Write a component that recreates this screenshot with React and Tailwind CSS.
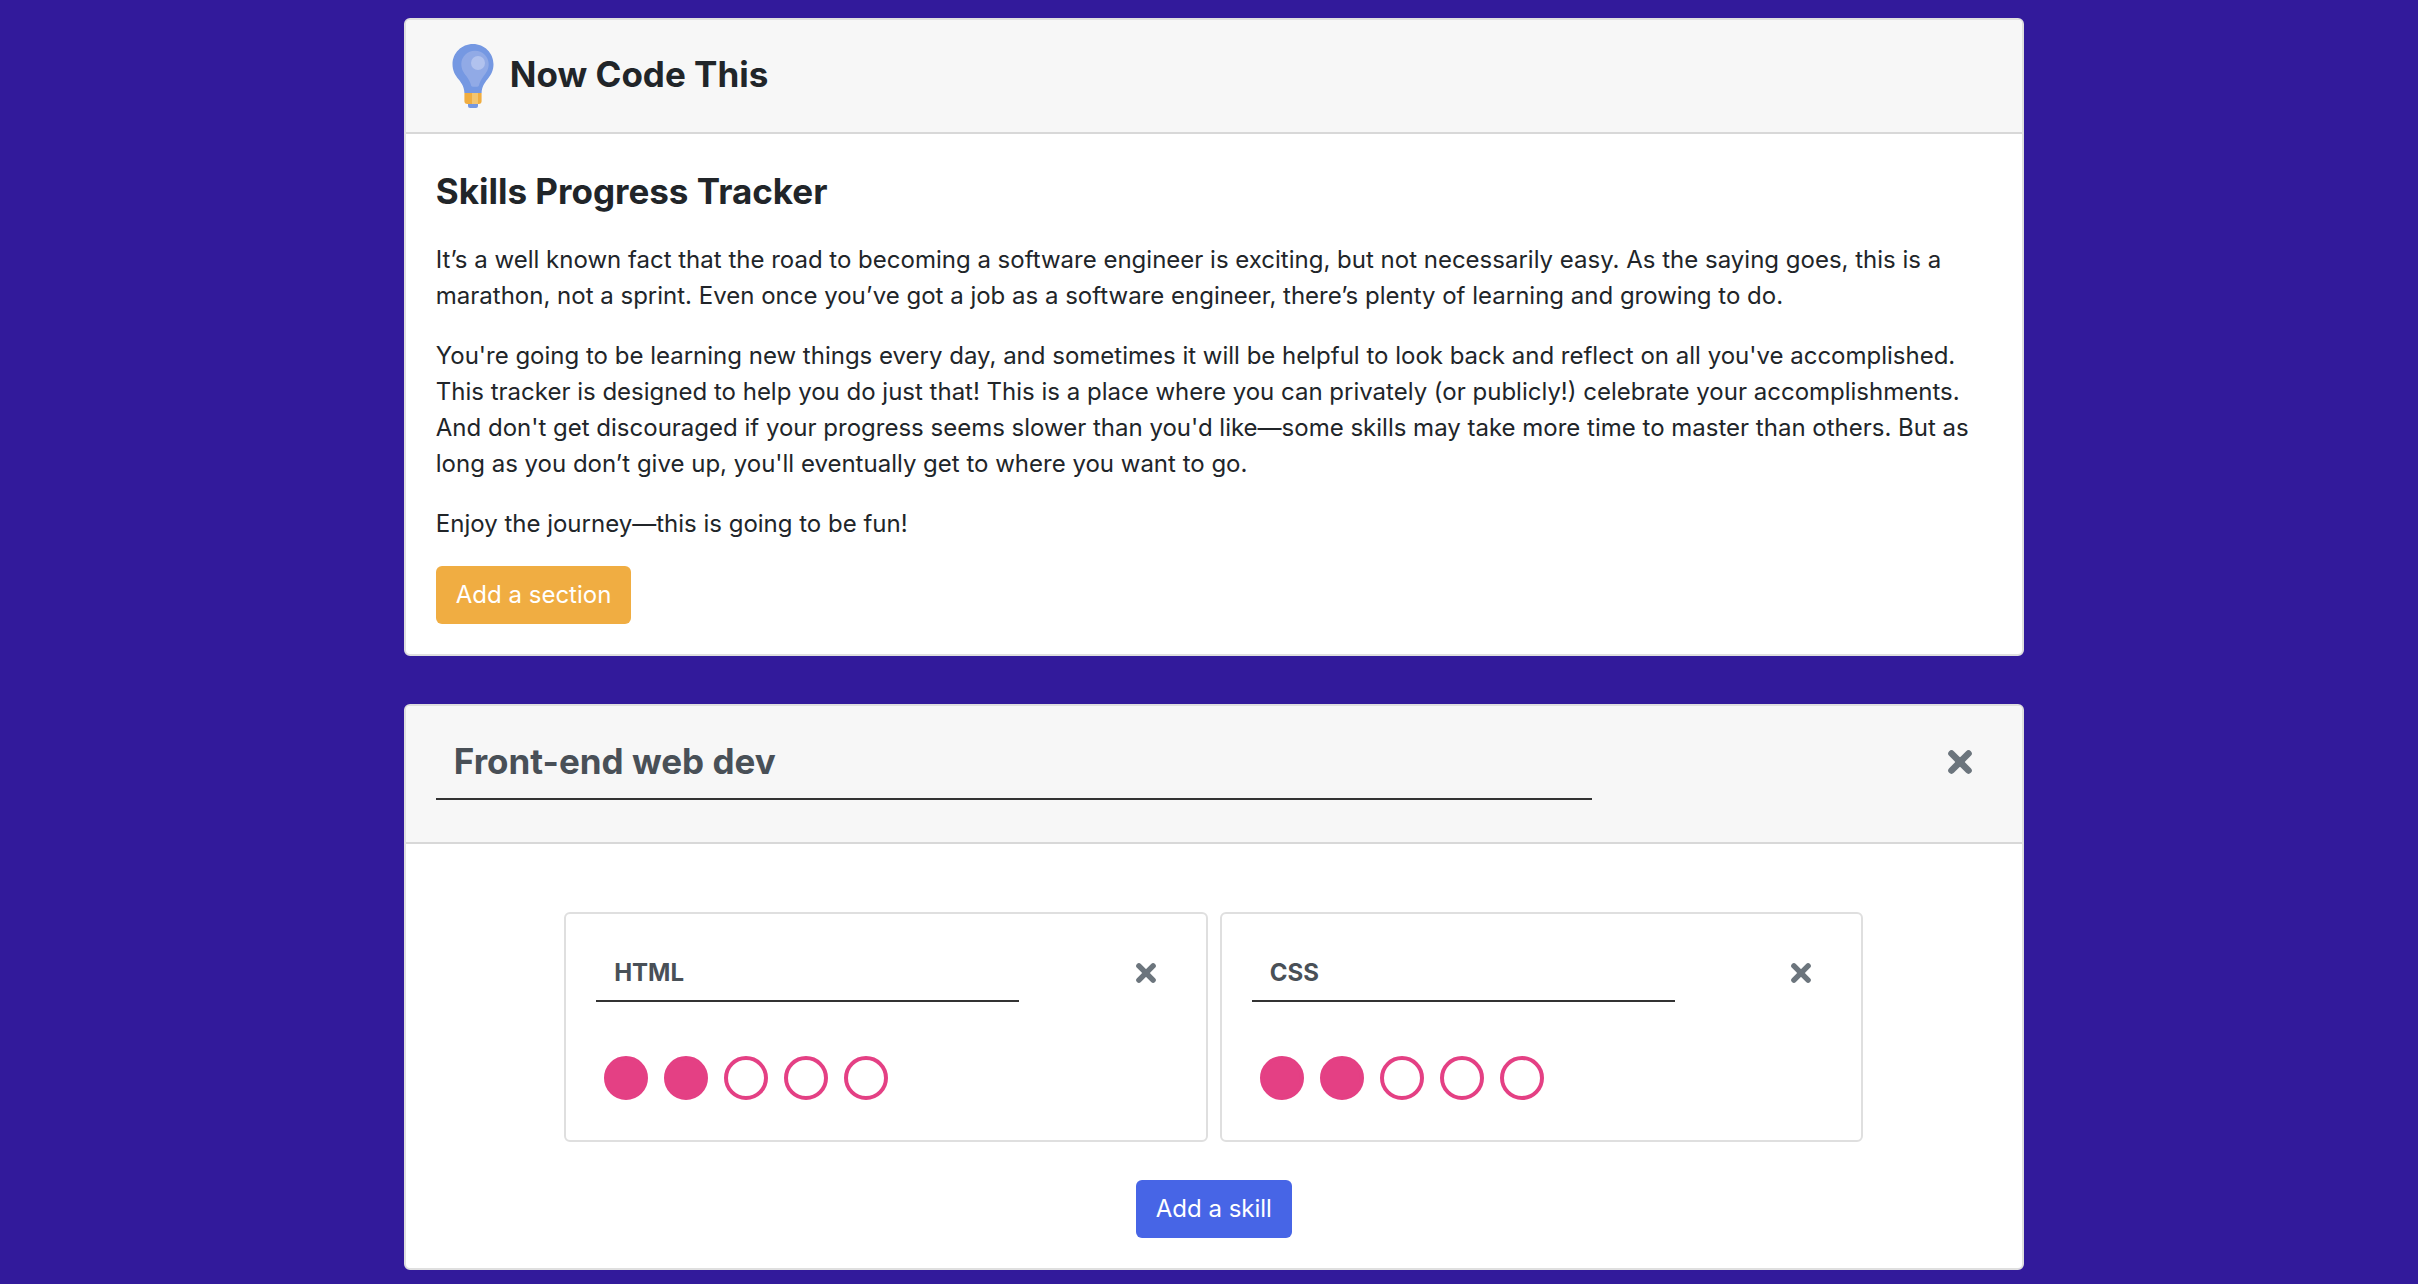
import { useState } from "react";

function Bulb() {
  return (
    <svg viewBox="0 0 42 64" className="h-16 w-[42px] shrink-0" aria-hidden="true">
      <path d="M21 0C9.600 0 .5 9 .5 20.200c0 6.600 2.700 10.800 6 15 3.500 4.400 5.700 8 5.900 13.800h17.200c.2-5.800 2.400-9.400 5.900-13.800 3.300-4.200 6-8.400 6-15C41.500 9 32.400 0 21 0z" fill="#7598e2" />
      <path d="M23 6.700c-7.700 0-13.700 6-13.700 13.300 0 5.200 2.300 8.500 5 12 2.500 3.300 4 6 4.700 9.300.2.900.8 1.400 1.600 1.400h4.800c.8 0 1.400-.5 1.600-1.400.7-3.300 2.200-6 4.700-9.300 2.700-3.500 5-6.800 5-12 0-7.300-6-13.300-13.700-13.300z" fill="#91aae6" />
      <circle cx="26" cy="19" r="7" fill="#b1c2ee" />
      <path d="M12.400 49h17.200v8a3 3 0 0 1-3 3H15.400a3 3 0 0 1-3-3z" fill="#f0ad40" />
      <path d="M20 49h6v11h-6z" fill="#f3c570" />
      <path d="M16 60h10v2a2 2 0 0 1-2 2h-6a2 2 0 0 1-2-2z" fill="#7598e2" />
    </svg>
  );
}

function Cross({ className }) {
  return (
    <svg viewBox="0 0 24 24" className={className} aria-hidden="true">
      <path d="M3.500 3.500l17 17M20.500 3.500l-17 17" stroke="currentColor" strokeWidth="6.600" strokeLinecap="round" />
      <path d="M12 6.800l5.200 5.200-5.200 5.200L6.800 12z" fill="currentColor" />
    </svg>
  );
}

function Card({ header, children }) {
  return (
    <section className="overflow-hidden rounded-md border-2 border-[#dfdfdf] bg-white">
      <header className="border-b-2 border-[#d8d8d8] bg-[#f7f7f7] px-[30px] py-[18px]">{header}</header>
      <div className="p-[30px]">{children}</div>
    </section>
  );
}

function Skill({ name, initial }) {
  const [level, setLevel] = useState(initial);
  return (
    <article className="flex-1 rounded-md border-2 border-[#dfdfdf] p-[30px]">
      <div className="flex items-center justify-between">
        <input
          aria-label="Skill name"
          defaultValue={name}
          className="h-[58px] w-[73%] border-b-2 border-[#333] bg-transparent px-[18px] font-bold text-[#495057] outline-none"
        />
        <button type="button" aria-label={"Remove " + name} className="px-5 text-[#6c757d]">
          <Cross className="size-5" />
        </button>
      </div>
      <div className="mt-[54px] mb-[10px] ml-2 flex gap-4" role="group" aria-label={name + " level"}>
        {[1, 2, 3, 4, 5].map((n) => (
          <button
            key={n}
            type="button"
            aria-label={"Level " + n}
            aria-pressed={n <= level}
            onClick={() => setLevel(n)}
            className={
              n <= level
                ? "size-11 rounded-full border-4 border-[#e44084] bg-[#e44084]"
                : "size-11 rounded-full border-4 border-[#e44084]"
            }
          />
        ))}
      </div>
    </article>
  );
}

export default function App() {
  return (
    <div className="min-h-screen bg-[#321a9b] py-[18px] font-['Inter',sans-serif] text-2xl leading-9 text-[#212529]">
      <main className="ml-[16.7%] flex w-[67%] flex-col gap-12">
        <Card
          header={
            <div className="flex h-[76px] items-center gap-4 pl-4">
              <Bulb />
              <h1 className="pb-1 text-[35px] font-bold">Now Code This</h1>
            </div>
          }
        >
          <h2 className="mb-6 text-[35px] leading-[54px] font-bold">Skills Progress Tracker</h2>
          <p className="mb-6">
            It’s a well known fact that the road to becoming a software engineer is exciting, but not necessarily easy. As the saying goes, this is a marathon, not a sprint. Even once you’ve got a job as a software engineer, there’s plenty of learning and growing to do.
          </p>
          <p className="mb-6">
            You're going to be learning new things every day, and sometimes it will be helpful to look back and reflect on all you've accomplished. This tracker is designed to help you do just that! This is a place where you can privately (or publicly!) celebrate your accomplishments. And don't get discouraged if your progress seems slower than you'd like—some skills may take more time to master than others. But as long as you don’t give up, you'll eventually get to where you want to go.
          </p>
          <p className="mb-6">Enjoy the journey—this is going to be fun!</p>
          <button type="button" className="block rounded-md bg-[#f0ad42] px-5 py-[11px] text-white">
            Add a section
          </button>
        </Card>

        <Card
          header={
            <div className="mb-6 flex items-center justify-between">
              <input
                aria-label="Section name"
                defaultValue="Front-end web dev"
                className="h-[76px] w-[74.3%] border-b-2 border-[#333] bg-transparent px-[18px] text-[35px] font-bold text-[#495057] outline-none"
              />
              <button type="button" aria-label="Remove section" className="px-5 text-[#6c757d]">
                <Cross className="size-6" />
              </button>
            </div>
          }
        >
          <div className="mx-auto my-[38px] flex w-[83.5%] gap-3">
            <Skill name="HTML" initial={2} />
            <Skill name="CSS" initial={2} />
          </div>
          <button type="button" className="mx-auto block rounded-md bg-[#4765e6] px-5 py-[11px] text-white">
            Add a skill
          </button>
        </Card>
      </main>
    </div>
  );
}
